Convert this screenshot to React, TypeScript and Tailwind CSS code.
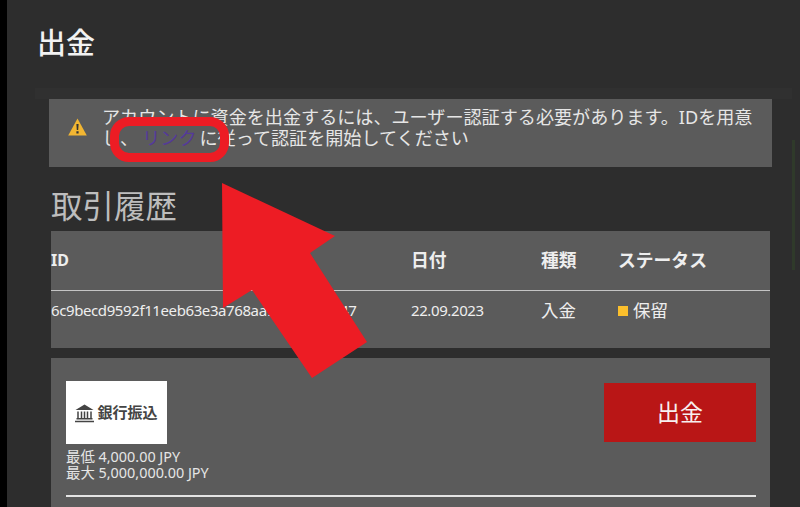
import React from 'react';

const jp = 'font-["Noto_Sans","Noto_Sans_CJK_JP",sans-serif]';

const BankIcon = () => (
  <svg width="21" height="20" viewBox="0 0 21 20" fill="none" stroke="#444" strokeWidth="1.5">
    <path d="M1.5 7 L10.5 1.5 L19.5 7 Z" fill="#444" stroke="none" />
    <path d="M4 8.5V15M7.5 8.5V15M10.5 8.5V15M13.5 8.5V15M17 8.5V15" />
    <path d="M2.5 15.7H18.5M1 18.5H20" />
  </svg>
);

const Overlay = () => (
  <>
    <div className="absolute left-[103px] top-[117px] h-[45px] w-[119px] rounded-[19px] border-[9px] border-[#ed1c24]" />
    <svg className="absolute left-[-7px] top-0" width="800" height="507" viewBox="0 0 800 507">
      <polygon points="222,183 335,236 310,253 367,342 312,378 252,290 223,308" fill="#ed1c24" />
    </svg>
  </>
);

export default function App() {
  return (
    <div className={`flex h-[507px] w-[800px] overflow-hidden bg-black ${jp}`}>
      <div className="w-[7px] shrink-0" />
      <div className="relative flex-1 bg-[#2d2d2d]">
        <h1 className="pl-[30px] pt-[23px] text-[29px] font-medium leading-[40px] text-[#f2f2f2]">出金</h1>
        <div className="ml-[28px] mr-[8px] mt-[25px] h-[11px] bg-[#303030]" />

        <div className="ml-[42px] mr-[28px] flex h-[68px] items-start bg-[#5b5b5b] pt-[8px]">
          <svg className="ml-[19px] mt-[11px] shrink-0" width="19" height="18" viewBox="0 0 19 18">
            <path d="M9.5 0.5 L18.8 17.5 H0.2 Z" fill="#f2b632" />
            <path d="M8.4 6H10.6L10.2 12H8.8Z M8.4 13.2H10.6V15.4H8.4Z" fill="#333" />
          </svg>
          <p className="ml-[15px] w-[655px] text-[18.1px] leading-[21px] text-[#e6e6e6]">
            アカウントに資金を出金するには、ユーザー認証する必要があります。IDを用意し、
            <span className="ml-[4px] mr-[3px] text-[#54399a]">リンク</span>
            に従って認証を開始してください
          </p>
        </div>

        <h2 className="pl-[44px] pt-[13px] text-[31.5px] leading-[51px] text-[#bdbdbd]">取引履歴</h2>

        <div className="ml-[44px] mr-[30px] h-[117px] bg-[#5b5b5b] text-[#eeeeee]">
          <div className="grid h-[60px] grid-cols-[360px_130px_77px_1fr] items-center border-b border-[#c4c4c4] pb-[1px] text-[17.8px] font-bold">
            <span className="text-[16px]">ID</span>
            <span>日付</span>
            <span>種類</span>
            <span>ステータス</span>
          </div>
          <div className="grid grid-cols-[360px_130px_77px_1fr] items-center pt-[7px] text-[15px] leading-[24px]">
            <span className="tracking-[-0.4px]">6c9becd9592f11eeb63e3a768aa90a1b2c3d47</span>
            <span className="tracking-[-0.4px]">22.09.2023</span>
            <span className="text-[17.5px]">入金</span>
            <span className="flex items-center text-[17.5px]">
              <span className="mr-[5px] mt-[2px] h-[10px] w-[10px] bg-[#fbbf2c]" />
              保留
            </span>
          </div>
        </div>

        <div className="ml-[44px] mr-[30px] mt-[10px] h-[149px] bg-[#5b5b5b] pl-[15px] pr-[14px] pt-[23px]">
          <div className="flex items-start justify-between">
            <div>
              <div className="flex h-[63px] w-[101px] items-center justify-center gap-[2px] bg-white pr-[1px]">
                <BankIcon />
                <span className="text-[15px] font-semibold leading-none text-[#444444]">銀行振込</span>
              </div>
              <div className="mt-[5px] text-[14.4px] leading-[16px] text-[#e6e6e6]">
                <div>最低 4,000.00 JPY</div>
                <div>最大 5,000,000.00 JPY</div>
              </div>
            </div>
            <button className="mt-[2px] flex h-[59px] w-[152px] items-center justify-center bg-[#b91616] text-[23px] text-[#f7f0f0]">
              出金
            </button>
          </div>
          <div className="mt-[14px] h-[2px] bg-[#e4e4e4]" />
        </div>

        <div className="absolute right-[5px] top-[140px] h-[130px] w-[3px] bg-[#2f3a2a]" />
        <Overlay />
      </div>
    </div>
  );
}
